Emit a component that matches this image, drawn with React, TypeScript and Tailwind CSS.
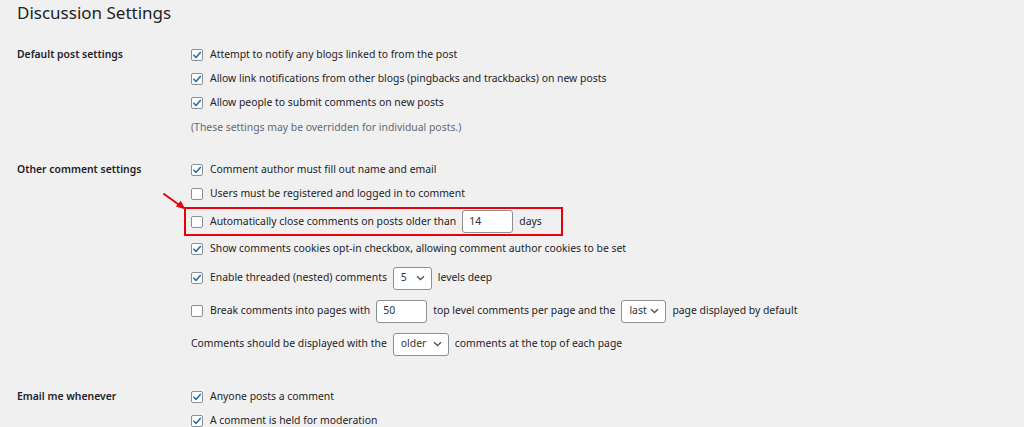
import React from "react";

const font = { fontFamily: '"Segoe UI", "Noto Sans", "Open Sans", sans-serif' };

function Check({ checked }: { checked?: boolean }) {
  return (
    <span className="relative inline-flex h-[12px] w-[12px] shrink-0 items-center justify-center rounded-[2px] border border-[#8c8f94] bg-white">
      {checked && (
        <svg width="10" height="10" viewBox="0 0 10 10" className="absolute">
          <path d="M1.8 5.2 L4 7.4 L8.3 2.4" fill="none" stroke="#2271b1" strokeWidth="1.6" strokeLinecap="round" strokeLinejoin="round" />
        </svg>
      )}
    </span>
  );
}

function Input({ value, w }: { value: string; w: string }) {
  return (
    <span className={`inline-flex h-[23px] ${w} items-center rounded-[3px] border border-[#8c8f94] bg-white pl-[6px] text-[#2c3338]`}>
      {value}
    </span>
  );
}

function Select({ value, w }: { value: string; w: string }) {
  return (
    <span className={`inline-flex h-[23px] ${w} items-center justify-between rounded-[3px] border border-[#8c8f94] bg-white pl-[7px] pr-[6px] text-[#2c3338]`}>
      <span>{value}</span>
      <svg width="9" height="6" viewBox="0 0 9 6">
        <path d="M1 1.2 L4.5 4.6 L8 1.2" fill="none" stroke="#50575e" strokeWidth="1.4" />
      </svg>
    </span>
  );
}

function Row({ children, h = "h-[24px]", extra = "" }: { children: React.ReactNode; h?: string; extra?: string }) {
  return <div className={`flex ${h} items-center ${extra}`}>{children}</div>;
}

function CheckRow({ checked, children, h, extra }: { checked?: boolean; children: React.ReactNode; h?: string; extra?: string }) {
  return (
    <Row h={h} extra={extra}>
      <Check checked={checked} />
      <span className="ml-[7px] flex items-center gap-[6px]">{children}</span>
    </Row>
  );
}

export default function App() {
  return (
    <div className="min-h-[427px] w-[1024px] overflow-hidden bg-[#f0f0f1] pl-[17px] text-[10.4px] text-[#1d2327]" style={font}>
      <h1 className="flex h-[25px] items-center text-[17px] font-normal leading-none text-[#1d2327]">Discussion Settings</h1>

      <div className="mt-[18px] flex">
        <div className="flex h-[24px] w-[174px] shrink-0 items-center font-semibold">Default post settings</div>
        <div className="flex flex-col">
          <CheckRow checked>Attempt to notify any blogs linked to from the post</CheckRow>
          <CheckRow checked>Allow link notifications from other blogs (pingbacks and trackbacks) on new posts</CheckRow>
          <CheckRow checked>Allow people to submit comments on new posts</CheckRow>
          <Row extra="mt-[1px] text-[#646970]">(These settings may be overridden for individual posts.)</Row>
        </div>
      </div>

      <div className="mt-[18px] flex">
        <div className="flex h-[24px] w-[174px] shrink-0 items-center font-semibold">Other comment settings</div>
        <div className="flex flex-col">
          <CheckRow checked>Comment author must fill out name and email</CheckRow>
          <CheckRow>Users must be registered and logged in to comment</CheckRow>
          <div className="relative ml-[-7px] mt-[1px] flex h-[29px] w-[379px] items-center border-2 border-[#e8000b] pl-[5px]">
            <svg className="absolute left-[-25px] top-[-18px]" width="28" height="22" viewBox="0 0 28 22">
              <path d="M3 3 L19 14.5" stroke="#e8000b" strokeWidth="2" fill="none" strokeLinecap="round" />
              <path d="M24.5 18.5 L14.8 15.6 L19.8 9.8 Z" fill="#e8000b" />
            </svg>
            <Check />
            <span className="ml-[7px] flex items-center gap-[6px]">
              Automatically close comments on posts older than <Input value="14" w="w-[51px]" /> days
            </span>
          </div>
          <CheckRow checked h="h-[26px]">Show comments cookies opt-in checkbox, allowing comment author cookies to be set</CheckRow>
          <CheckRow checked h="h-[28px]" extra="mt-[2px]">
            Enable threaded (nested) comments <Select value="5" w="w-[39px]" /> levels deep
          </CheckRow>
          <CheckRow h="h-[28px]" extra="mt-[5px]">
            Break comments into pages with <Input value="50" w="w-[51px]" /> top level comments per page and the{" "}
            <Select value="last" w="w-[45px]" /> page displayed by default
          </CheckRow>
          <Row h="h-[28px]" extra="mt-[5px] gap-[6px]">
            Comments should be displayed with the <Select value="older" w="w-[56px]" /> comments at the top of each page
          </Row>
        </div>
      </div>

      <div className="mt-[27px] flex">
        <div className="flex h-[24px] w-[174px] shrink-0 items-center font-semibold">Email me whenever</div>
        <div className="flex flex-col">
          <CheckRow checked>Anyone posts a comment</CheckRow>
          <CheckRow checked>A comment is held for moderation</CheckRow>
        </div>
      </div>
    </div>
  );
}
